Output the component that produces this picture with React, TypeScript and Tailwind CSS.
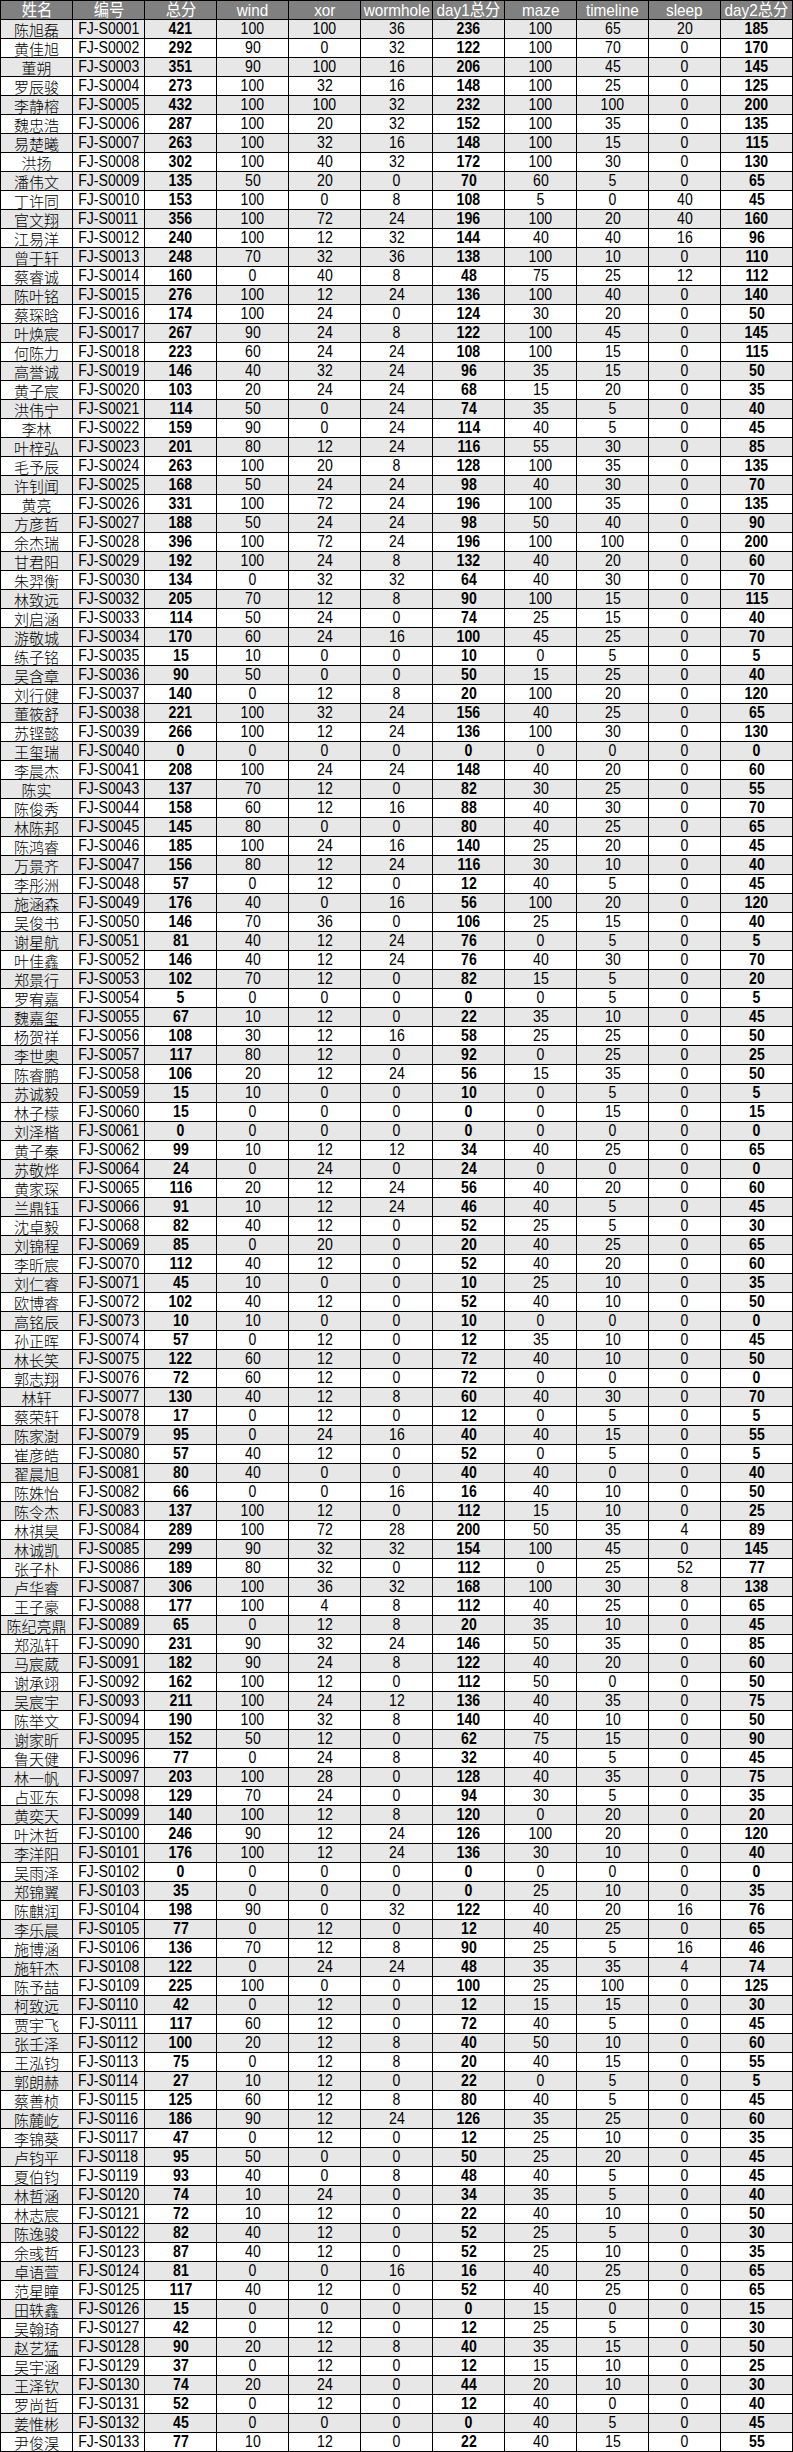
import React from 'react';

const HEAD = ['姓名', '编号', '总分', 'wind', 'xor', 'wormhole', 'day1总分', 'maze', 'timeline', 'sleep', 'day2总分'];

// 姓名 编号 总分 wind xor wormhole day1 maze timeline sleep day2
const RAW = `陈旭磊 1 421 100 100 36 236 100 65 20 185
黄佳旭 2 292 90 0 32 122 100 70 0 170
董朔 3 351 90 100 16 206 100 45 0 145
罗辰骏 4 273 100 32 16 148 100 25 0 125
李静榕 5 432 100 100 32 232 100 100 0 200
魏忠浩 6 287 100 20 32 152 100 35 0 135
易楚曦 7 263 100 32 16 148 100 15 0 115
洪扬 8 302 100 40 32 172 100 30 0 130
潘伟文 9 135 50 20 0 70 60 5 0 65
丁许同 10 153 100 0 8 108 5 0 40 45
官文翔 11 356 100 72 24 196 100 20 40 160
江易洋 12 240 100 12 32 144 40 40 16 96
曾于轩 13 248 70 32 36 138 100 10 0 110
蔡睿诚 14 160 0 40 8 48 75 25 12 112
陈叶铭 15 276 100 12 24 136 100 40 0 140
蔡琛晗 16 174 100 24 0 124 30 20 0 50
叶焕宸 17 267 90 24 8 122 100 45 0 145
何陈力 18 223 60 24 24 108 100 15 0 115
高誉诚 19 146 40 32 24 96 35 15 0 50
黄子宸 20 103 20 24 24 68 15 20 0 35
洪伟宁 21 114 50 0 24 74 35 5 0 40
李林 22 159 90 0 24 114 40 5 0 45
叶梓弘 23 201 80 12 24 116 55 30 0 85
毛予辰 24 263 100 20 8 128 100 35 0 135
许钊闻 25 168 50 24 24 98 40 30 0 70
黄亮 26 331 100 72 24 196 100 35 0 135
方彦哲 27 188 50 24 24 98 50 40 0 90
余杰瑞 28 396 100 72 24 196 100 100 0 200
甘君阳 29 192 100 24 8 132 40 20 0 60
朱羿衡 30 134 0 32 32 64 40 30 0 70
林致远 32 205 70 12 8 90 100 15 0 115
刘启涵 33 114 50 24 0 74 25 15 0 40
游敬城 34 170 60 24 16 100 45 25 0 70
练子铭 35 15 10 0 0 10 0 5 0 5
吴含章 36 90 50 0 0 50 15 25 0 40
刘行健 37 140 0 12 8 20 100 20 0 120
董筱舒 38 221 100 32 24 156 40 25 0 65
苏铿懿 39 266 100 12 24 136 100 30 0 130
王玺瑞 40 0 0 0 0 0 0 0 0 0
李晨杰 41 208 100 24 24 148 40 20 0 60
陈实 43 137 70 12 0 82 30 25 0 55
陈俊秀 44 158 60 12 16 88 40 30 0 70
林陈邦 45 145 80 0 0 80 40 25 0 65
陈鸿睿 46 185 100 24 16 140 25 20 0 45
万景齐 47 156 80 12 24 116 30 10 0 40
李彤洲 48 57 0 12 0 12 40 5 0 45
施涵森 49 176 40 0 16 56 100 20 0 120
吴俊书 50 146 70 36 0 106 25 15 0 40
谢星航 51 81 40 12 24 76 0 5 0 5
叶佳鑫 52 146 40 12 24 76 40 30 0 70
郑景行 53 102 70 12 0 82 15 5 0 20
罗宥嘉 54 5 0 0 0 0 0 5 0 5
魏嘉玺 55 67 10 12 0 22 35 10 0 45
杨贺祥 56 108 30 12 16 58 25 25 0 50
李世奥 57 117 80 12 0 92 0 25 0 25
陈睿鹏 58 106 20 12 24 56 15 35 0 50
苏诚毅 59 15 10 0 0 10 0 5 0 5
林子檬 60 15 0 0 0 0 0 15 0 15
刘泽楷 61 0 0 0 0 0 0 0 0 0
黄子秦 62 99 10 12 12 34 40 25 0 65
苏敬烨 64 24 0 24 0 24 0 0 0 0
黄家琛 65 116 20 12 24 56 40 20 0 60
兰鼎钰 66 91 10 12 24 46 40 5 0 45
沈卓毅 68 82 40 12 0 52 25 5 0 30
刘锦程 69 85 0 20 0 20 40 25 0 65
李昕宸 70 112 40 12 0 52 40 20 0 60
刘仁睿 71 45 10 0 0 10 25 10 0 35
欧博睿 72 102 40 12 0 52 40 10 0 50
高铭辰 73 10 10 0 0 10 0 0 0 0
孙正晖 74 57 0 12 0 12 35 10 0 45
林长笑 75 122 60 12 0 72 40 10 0 50
郭志翔 76 72 60 12 0 72 0 0 0 0
林轩 77 130 40 12 8 60 40 30 0 70
蔡荣轩 78 17 0 12 0 12 0 5 0 5
陈家澍 79 95 0 24 16 40 40 15 0 55
崔彦皓 80 57 40 12 0 52 0 5 0 5
翟晨旭 81 80 40 0 0 40 40 0 0 40
陈姝怡 82 66 0 0 16 16 40 10 0 50
陈令杰 83 137 100 12 0 112 15 10 0 25
林祺昊 84 289 100 72 28 200 50 35 4 89
林诚凯 85 299 90 32 32 154 100 45 0 145
张子朴 86 189 80 32 0 112 0 25 52 77
卢华睿 87 306 100 36 32 168 100 30 8 138
王子豪 88 177 100 4 8 112 40 25 0 65
陈纪亮鼎 89 65 0 12 8 20 35 10 0 45
郑泓轩 90 231 90 32 24 146 50 35 0 85
马宸葳 91 182 90 24 8 122 40 20 0 60
谢承翊 92 162 100 12 0 112 50 0 0 50
吴宸宇 93 211 100 24 12 136 40 35 0 75
陈举文 94 190 100 32 8 140 40 10 0 50
谢家昕 95 152 50 12 0 62 75 15 0 90
鲁天健 96 77 0 24 8 32 40 5 0 45
林一帆 97 203 100 28 0 128 40 35 0 75
占亚东 98 129 70 24 0 94 30 5 0 35
黄奕天 99 140 100 12 8 120 0 20 0 20
叶沐哲 100 246 90 12 24 126 100 20 0 120
李洋阳 101 176 100 12 24 136 30 10 0 40
吴雨泽 102 0 0 0 0 0 0 0 0 0
郑锦翼 103 35 0 0 0 0 25 10 0 35
陈麒润 104 198 90 0 32 122 40 20 16 76
李乐晨 105 77 0 12 0 12 40 25 0 65
施博涵 106 136 70 12 8 90 25 5 16 46
施轩杰 108 122 0 24 24 48 35 35 4 74
陈予喆 109 225 100 0 0 100 25 100 0 125
柯致远 110 42 0 12 0 12 15 15 0 30
贾宇飞 111 117 60 12 0 72 40 5 0 45
张壬泽 112 100 20 12 8 40 50 10 0 60
王泓钧 113 75 0 12 8 20 40 15 0 55
郭朗赫 114 27 10 12 0 22 0 5 0 5
蔡善桢 115 125 60 12 8 80 40 5 0 45
陈麓屹 116 186 90 12 24 126 35 25 0 60
李锦葵 117 47 0 12 0 12 25 10 0 35
卢钧平 118 95 50 0 0 50 25 20 0 45
夏伯钧 119 93 40 0 8 48 40 5 0 45
林哲涵 120 74 10 24 0 34 35 5 0 40
林志宸 121 72 10 12 0 22 40 10 0 50
陈逸骏 122 82 40 12 0 52 25 5 0 30
余彧哲 123 87 40 12 0 52 25 10 0 35
卓语萱 124 81 0 0 16 16 40 25 0 65
范星瞳 125 117 40 12 0 52 40 25 0 65
田轶鑫 126 15 0 0 0 0 15 0 0 15
吴翰琦 127 42 0 12 0 12 25 5 0 30
赵艺猛 128 90 20 12 8 40 35 15 0 50
吴宇涵 129 37 0 12 0 12 15 10 0 25
王泽钦 130 74 20 24 0 44 20 10 0 30
罗尚哲 131 52 0 12 0 12 40 0 0 40
姜惟彬 132 45 0 0 0 0 40 5 0 45
尹俊淏 133 77 10 12 0 22 40 15 0 55`;

const ROWS = RAW.split('\n').map((line) => {
  const [name, no, ...nums] = line.trim().split(' ');
  return { name, id: 'FJ-S' + no.padStart(4, '0'), nums };
});

const BOLD = [0, 4, 8]; // 总分, day1总分, day2总分 inside nums

const cell = 'h-[19px] border-r border-b border-black flex items-center justify-center overflow-hidden whitespace-nowrap leading-none';
// 窄字体：没有 Arial Narrow，只好横向压一下
const narrow = 'inline-block scale-x-[0.88]';

export default function App() {
  return (
    <div className="w-[793px] bg-white border-t border-l border-black font-['Liberation_Sans',sans-serif] text-[16px] text-black">
      {/* 表头 */}
      <div className="grid grid-cols-11 grid-rows-[19px] h-[19px] bg-[#808080] text-white">
        {HEAD.map((h) => (
          <div key={h} className={`${cell} text-[17px] font-['Liberation_Sans','Noto_Sans_CJK_SC',sans-serif]`}>
            <span className="inline-block scale-x-[0.9]">{h}</span>
          </div>
        ))}
      </div>

      {ROWS.map((r, i) => (
        <div key={r.id} className={`grid grid-cols-11 grid-rows-[19px] h-[19px] ${i % 2 === 0 ? 'bg-[#e7e7e7]' : 'bg-white'}`}>
          <div className={`${cell} font-['Noto_Sans_CJK_SC',sans-serif] font-light text-[15px]`}>
            {r.name}
          </div>
          <div className={cell}>
            <span className={narrow}>{r.id}</span>
          </div>
          {r.nums.map((n, j) => (
            <div key={j} className={`${cell} ${BOLD.includes(j) ? 'font-bold' : 'font-normal'}`}>
              <span className={narrow}>{n}</span>
            </div>
          ))}
        </div>
      ))}
    </div>
  );
}
